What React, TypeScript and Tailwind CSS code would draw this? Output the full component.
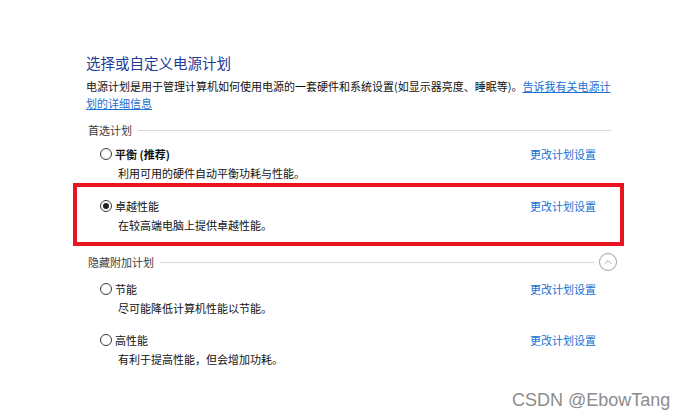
import { ChevronUp } from 'lucide-react';

const font = { fontFamily: '"Noto Sans CJK SC", "Microsoft YaHei", sans-serif' };

function Radio({ checked }: { checked?: boolean }) {
  return (
    <span className="w-[12px] h-[12px] rounded-full border border-[#3a3a3a] flex items-center justify-center shrink-0">
      {checked && <span className="w-[6px] h-[6px] rounded-full bg-[#222]" />}
    </span>
  );
}

interface PlanProps {
  name: string;
  desc: string;
  checked?: boolean;
  bold?: boolean;
}

function Plan({ name, desc, checked, bold }: PlanProps) {
  return (
    <div>
      <div className="flex items-center h-[16px]">
        <Radio checked={checked} />
        <span className={`ml-[3px] text-[11px] leading-[16px] text-[#111] ${bold ? 'font-bold' : ''}`}>{name}</span>
        <a className="ml-auto text-[11px] leading-[16px] text-[#1a6fd0]">更改计划设置</a>
      </div>
      <div className="mt-[3px] pl-[18px] text-[11px] leading-[16px] text-[#111]">{desc}</div>
    </div>
  );
}

export default function App() {
  return (
    <div className="relative w-[686px] h-[420px] bg-white overflow-hidden" style={font}>
      <div className="ml-[73px] w-[551px] pt-[53px]">
        <h1 className="pl-[13px] text-[14.5px] leading-[20px] text-[#1e3a9a]">选择或自定义电源计划</h1>
        <p className="mt-[5px] pl-[13px] text-[11px] leading-[17px] text-[#111]">
          电源计划是用于管理计算机如何使用电源的一套硬件和系统设置(如显示器亮度、睡眠等)。
          <a className="text-[#1a6fd0] underline underline-offset-1">告诉我有关电源计</a>
          <br />
          <a className="text-[#1a6fd0] underline underline-offset-1">划的详细信息</a>
        </p>

        <div className="mt-[10px] pl-[15px] pr-[13px] flex items-center h-[16px]">
          <span className="text-[11px] leading-[16px] text-[#3c3c3c]">首选计划</span>
          <span className="ml-[6px] flex-1 h-px bg-[#d6d6d6]" />
        </div>

        <div className="mt-[8px] pl-[27px] pr-[28px]">
          <Plan name="平衡 (推荐)" desc="利用可用的硬件自动平衡功耗与性能。" bold />
        </div>

        <div className="mt-[2px] border-[4px] border-[#e8141f] pl-[23px] pr-[24px] pt-[11px] pb-[9px]">
          <Plan name="卓越性能" desc="在较高端电脑上提供卓越性能。" checked />
        </div>

        <div className="mt-[7px] pl-[15px] pr-[7px] flex items-center h-[18px]">
          <span className="text-[11px] leading-[16px] text-[#3c3c3c]">隐藏附加计划</span>
          <span className="ml-[6px] flex-1 h-px bg-[#d6d6d6]" />
          <span className="ml-[5px] w-[18px] h-[18px] rounded-full border border-[#a0a0a0] flex items-center justify-center">
            <ChevronUp className="w-[12px] h-[12px] text-[#8a8a8a]" strokeWidth={1.5} />
          </span>
        </div>

        <div className="mt-[10px] pl-[27px] pr-[28px]">
          <Plan name="节能" desc="尽可能降低计算机性能以节能。" />
        </div>

        <div className="mt-[16px] pl-[27px] pr-[28px]">
          <Plan name="高性能" desc="有利于提高性能，但会增加功耗。" />
        </div>
      </div>

      <div
        className="absolute left-[512px] top-[389px] text-[18px] leading-[22px] text-[#8c8c8c]"
        style={{ fontFamily: '"Liberation Sans", Arial, sans-serif', textShadow: '0 0 2px #fff' }}
      >
        CSDN @EbowTang
      </div>
    </div>
  );
}
